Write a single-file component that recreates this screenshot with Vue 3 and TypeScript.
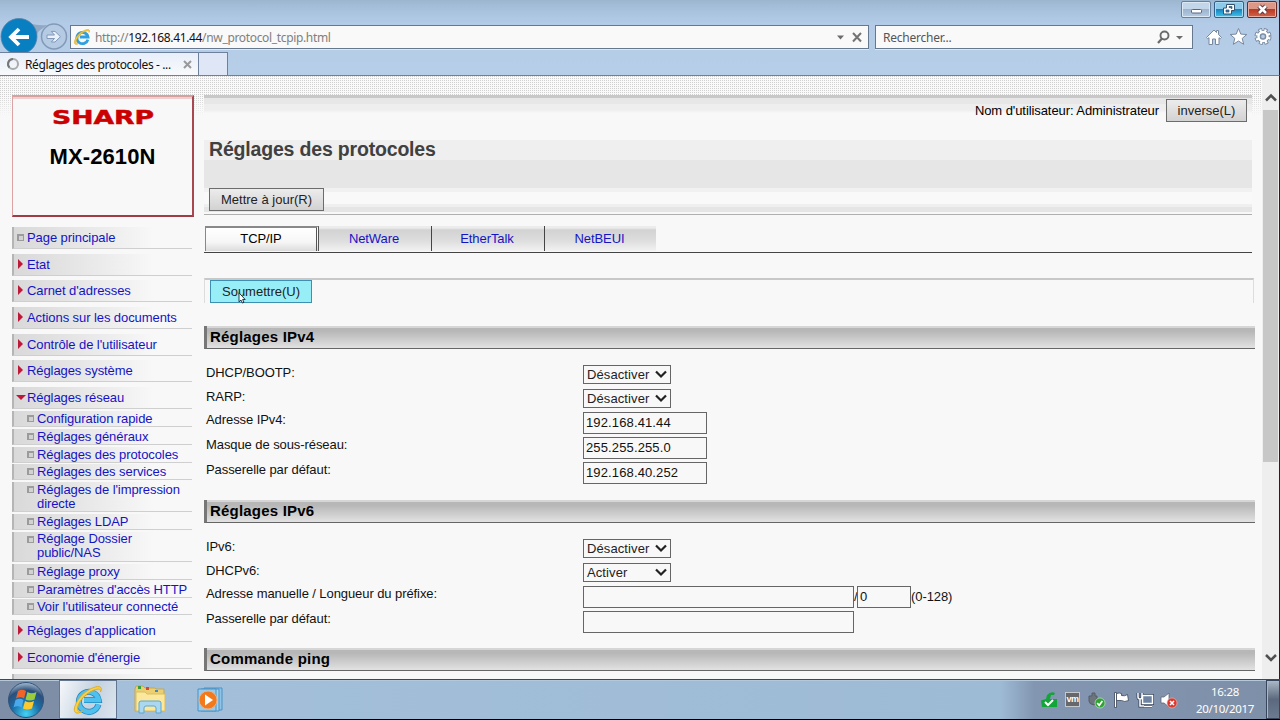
<script setup lang="ts">
import { ref } from 'vue'

interface MenuItem {
  label: string
  kind: 'page' | 'closed' | 'open' | 'sub'
  tall?: boolean
}

interface Field {
  label: string
  type: 'select' | 'text' | 'wide' | 'prefix'
  value: string
}

const before: MenuItem[] = [
  { label: 'Page principale', kind: 'page' },
  { label: 'Etat', kind: 'closed' },
  { label: "Carnet d'adresses", kind: 'closed' },
  { label: 'Actions sur les documents', kind: 'closed' },
  { label: "Contrôle de l'utilisateur", kind: 'closed' },
  { label: 'Réglages système', kind: 'closed' },
  { label: 'Réglages réseau', kind: 'open' },
]
const subs: MenuItem[] = [
  { label: 'Configuration rapide', kind: 'sub' },
  { label: 'Réglages généraux', kind: 'sub' },
  { label: 'Réglages des protocoles', kind: 'sub' },
  { label: 'Réglages des services', kind: 'sub' },
  { label: "Réglages de l'impression\ndirecte", kind: 'sub', tall: true },
  { label: 'Réglages LDAP', kind: 'sub' },
  { label: 'Réglage Dossier\npublic/NAS', kind: 'sub', tall: true },
  { label: 'Réglage proxy', kind: 'sub' },
  { label: "Paramètres d'accès HTTP", kind: 'sub' },
  { label: "Voir l'utilisateur connecté", kind: 'sub' },
]
const after: MenuItem[] = [
  { label: "Réglages d'application", kind: 'closed' },
  { label: "Economie d'énergie", kind: 'closed' },
  { label: '', kind: 'closed' },
]
const tabs = ['TCP/IP', 'NetWare', 'EtherTalk', 'NetBEUI']
const activeTab = ref('TCP/IP')

const ipv4: Field[] = [
  { label: 'DHCP/BOOTP:', type: 'select', value: 'Désactiver' },
  { label: 'RARP:', type: 'select', value: 'Désactiver' },
  { label: 'Adresse IPv4:', type: 'text', value: '192.168.41.44' },
  { label: 'Masque de sous-réseau:', type: 'text', value: '255.255.255.0' },
  { label: 'Passerelle par défaut:', type: 'text', value: '192.168.40.252' },
]
const ipv6: Field[] = [
  { label: 'IPv6:', type: 'select', value: 'Désactiver' },
  { label: 'DHCPv6:', type: 'select', value: 'Activer' },
  { label: 'Adresse manuelle / Longueur du préfixe:', type: 'prefix', value: '' },
  { label: 'Passerelle par défaut:', type: 'wide', value: '' },
]
const sections = [
  { title: 'Réglages IPv4', fields: ipv4, cls: 'v4' },
  { title: 'Réglages IPv6', fields: ipv6, cls: 'v6' },
  { title: 'Commande ping', fields: [] as Field[], cls: 'ping' },
]
</script>

<template>
  <div class="screen">
    <header class="chrome">
      <div class="winbtns">
        <span class="wb min"><svg width="30" height="16"><rect x="10.500" y="8.500" width="10" height="3.500" rx="1" fill="#fff" stroke="#566780" /></svg></span>
        <span class="wb max"><svg width="30" height="16"><path d="M12.500 3.500h8v6h-3v3.500h-8v-6h3z" fill="#fff" stroke="#36516e" /><path d="M12 9h3v2h-3zM15 5.500h3v2h-1v-1h-2z" fill="#2b7cb0" stroke="#36516e" stroke-width=".7" /></svg></span>
        <span class="wb cls"><svg width="30" height="16"><path d="M12 5l7 7M19 5l-7 7" stroke="#4c3039" stroke-width="4.500" /><path d="M12 5l7 7M19 5l-7 7" stroke="#fff" stroke-width="2.600" /></svg></span>
      </div>
      <div class="navrow">
        <svg class="nav" width="70" height="36" viewBox="0 0 70 36">
          <path d="M27 4q9 4 20 3l-8 6q-3 3-2 8z" fill="#91a8c3" />
          <circle cx="19" cy="18.500" r="18" fill="#087fc0" stroke="#5b83a8" stroke-width=".8" />
          <path d="M29 19H12M19 11l-8 8 8 8" fill="none" stroke="#fff" stroke-width="3.800" />
          <circle cx="54" cy="18.500" r="12.500" fill="#b5cbe4" stroke="#8299b8" stroke-width="1.500" />
          <path d="M47 17h7.500l-3.200-3.600h3.700l5.500 5.300-5.500 5.300h-3.700l3.200-3.500H47z" fill="#e9f1fa" stroke="#8299b8" />
        </svg>
        <div class="address">
          <svg class="ie" width="18" height="18" viewBox="0 0 32 32"><path d="M26.500 20.500A10 10 0 1 1 26.700 16H12" fill="none" stroke="#2f9fdf" stroke-width="5" /><path d="M4 29C-1 26 6 13 15 7S32 1 28.500 8C30 3 22 5 15 10S4 24 6 27q1 2 5 0-5 3-7 2z" fill="#f3c93c" stroke="#e5ac20" /></svg>
          <span class="url">http://<b>192.168.41.44</b>/nw_protocol_tcpip.html</span>
          <svg class="acts" width="30" height="14"><path d="M0 5.500h7L3.500 9.500z" fill="#6c6c6c" /><path d="M16 3l8 8.500M24 3l-8 8.500" stroke="#747474" stroke-width="2" /></svg>
        </div>
        <div class="search">
          <span>Rechercher...</span>
          <svg width="28" height="16"><circle cx="8.500" cy="6.500" r="4" fill="none" stroke="#6b6b6b" stroke-width="1.900" /><path d="M6 9.500l-4 4.500" stroke="#6b6b6b" stroke-width="2.200" /><path d="M20 7h7L23.500 10.500z" fill="#6c6c6c" /></svg>
        </div>
        <svg class="tools" width="68" height="20" viewBox="0 0 68 20" fill="#fff" stroke="#77899f">
          <path d="M1.500 10.500L9 3l2.500 2.500V3.500h2v4l3 3-1.200 1.200-1.300-1V17.500h-3.500V12H7.500v5.500H4V10.700l-1.300 1z" />
          <path d="M33.500 1.500l2.300 5.600 6 .4-4.600 3.900 1.500 5.900-5.200-3.300-5.200 3.300 1.500-5.900-4.600-3.900 6-.4z" />
          <g fill="none">
            <circle cx="58" cy="9.500" r="6" stroke-width="5" stroke-dasharray="3.200 1.512" />
            <circle cx="58" cy="9.500" r="4.300" stroke-width="4.600" />
            <circle cx="58" cy="9.500" r="5.800" stroke="#fff" stroke-width="3.600" stroke-dasharray="1.900 2.655" stroke-dashoffset="-.6" />
            <circle cx="58" cy="9.500" r="4.500" stroke="#fff" stroke-width="2.400" />
            <circle cx="58" cy="9.500" r="2.300" fill="#b6cde6" stroke-width=".8" />
          </g>
        </svg>
      </div>
      <div class="tabrow">
        <div class="btab">
          <svg width="14" height="14"><circle cx="7" cy="7" r="5" fill="none" stroke="#aaa" stroke-width="2" /><path d="M3.500 10.500A5 5 0 0 1 7 2" fill="none" stroke="#777" stroke-width="2" /></svg>
          <span class="btitle">Réglages des protocoles - ...</span>
          <svg class="bx" width="9" height="9"><path d="M1 1l7 7M8 1l-7 7" stroke="#999" stroke-width="2" /></svg>
        </div>
        <div class="newtab"></div>
      </div>
    </header>

    <div class="viewport">
      <aside class="side">
        <div class="brand">
          <svg width="120" height="26"><text x="9" y="19" class="sharp" textLength="102" lengthAdjust="spacingAndGlyphs">SHARP</text></svg>
          <div class="model">MX-2610N</div>
        </div>
        <nav class="menu">
          <a v-for="m in before" :key="m.label" class="item" :class="m.kind">
            <i class="mark"></i><span>{{ m.label }}</span>
          </a>
          <div class="subs">
            <a v-for="m in subs" :key="m.label" class="item sub" :class="{ tall: m.tall }">
              <i class="mark"></i><span>{{ m.label }}</span>
            </a>
          </div>
          <a v-for="m in after" :key="m.label" class="item" :class="[m.kind, { blank: !m.label }]">
            <i class="mark"></i><span>{{ m.label }}</span>
          </a>
        </nav>
      </aside>

      <main class="main">
        <div class="userbar">
          <span>Nom d'utilisateur: Administrateur</span>
          <button class="btn logout">inverse(L)</button>
        </div>
        <div class="content">
          <div class="titleband">
            <h1>Réglages des protocoles</h1>
            <button class="btn refresh">Mettre à jour(R)</button>
          </div>
          <div class="tabs">
            <a v-for="t in tabs" :key="t" class="tab" :class="{ on: t === activeTab }" @click="activeTab = t">{{ t }}</a>
          </div>
          <div class="submitrow">
            <button class="btn submit">Soumettre(U)
              <svg class="cursor" width="8" height="12" viewBox="0 0 8 12"><path d="M1 .8v9l2-1.700 1.500 3 1.500-.8-1.400-2.800h2.600z" fill="#fff" stroke="#123" stroke-width=".9" /></svg>
            </button>
          </div>
          <section v-for="s in sections" :key="s.title" :class="s.cls">
            <h2>{{ s.title }}</h2>
            <div class="fields">
              <div v-for="f in s.fields" :key="f.label" class="field" :class="f.type">
                <label>{{ f.label }}</label>
                <div v-if="f.type === 'select'" class="picker">
                  <span>{{ f.value }}</span>
                  <svg width="12" height="9"><path d="M1 1.500l5 5 5-5" fill="none" stroke="#222" stroke-width="2.200" /></svg>
                </div>
                <template v-else>
                  <div class="input">{{ f.value }}</div>
                  <template v-if="f.type === 'prefix'">
                    <span class="slash">/</span>
                    <div class="input short">0</div>
                    <span class="range">(0-128)</span>
                  </template>
                </template>
              </div>
            </div>
          </section>
        </div>
      </main>

      <div class="scroll">
        <svg width="14" height="12"><path d="M2 9.500L7 4.500l5 5" fill="none" stroke="#505050" stroke-width="2.500" /></svg>
        <div class="thumb"></div>
        <svg class="down" width="14" height="12"><path d="M2 3l5 5 5-5" fill="none" stroke="#505050" stroke-width="2.500" /></svg>
      </div>
    </div>

    <footer class="taskbar">
      <div class="start">
        <svg width="38" height="38" viewBox="0 0 38 38">
          <defs><radialGradient id="orb" cx=".5" cy=".9" r=".9"><stop offset="0" stop-color="#43d3f5" /><stop offset=".45" stop-color="#1a6da5" /><stop offset=".75" stop-color="#2c4f7a" /><stop offset="1" stop-color="#a8bdd2" /></radialGradient></defs>
          <circle cx="19" cy="19" r="17.500" fill="url(#orb)" stroke="#31557c" />
          <path d="M11 10q4-2.500 8 0l-2 7.500q-4-2.500-8 0z" fill="#f0642a" /><path d="M20.500 11q4 2.500 9 0l-2 7.500q-5 2-9 0z" fill="#9bcc3c" />
          <path d="M8.500 19q4-2.500 8 0l-2 7.500q-4-2.500-8 0z" fill="#48a9ec" /><path d="M18 20q4 2.500 9 0l-2 7.500q-5 2-9 0z" fill="#fcc92e" />
        </svg>
      </div>
      <div class="task active">
        <svg width="32" height="32" viewBox="0 0 32 32"><path d="M26.500 20.500A10 10 0 1 1 26.700 16H12" fill="none" stroke="#2187c4" stroke-width="6" /><path d="M26.500 20.500A10 10 0 1 1 26.700 16H12" fill="none" stroke="#4fc1ee" stroke-width="4.500" /><path d="M4 29C-1 26 6 13 15 7S32 1 28.500 8C30 3 22 5 15 10S4 24 6 27q1 2 5 0-5 3-7 2z" fill="#f8d347" stroke="#e1ac25" /></svg>
      </div>
      <div class="task folder">
        <svg width="34" height="32" viewBox="0 0 34 32"><path d="M2 5l1-3h7l2 2h10l1 1h8v22H2z" fill="#eccf70" stroke="#c7a749" /><path d="M5 2h3v3H5z" fill="#3a9c3d" /><path d="M13 3h3v3h-3z" fill="#d74a32" /><path d="M22 6h3v2h-3z" fill="#3a8ad0" /><path d="M3 8h9l2 2h18v17H3z" fill="#fbe89c" stroke="#d8bd62" /><path d="M6 29V19q0-2 2-2h18q2 0 2 2v10h-5v-5q0-2-2-2h-8q-2 0-2 2v5z" fill="#a9d8f0" stroke="#5ea6d0" /></svg>
      </div>
      <div class="task media">
        <svg width="30" height="28" viewBox="0 0 30 28"><path d="M8 2h18v22H8z" fill="#8fc4e8" stroke="#4b93c5" /><path d="M5 3h18v22H5z" fill="#a6d2ee" stroke="#4b93c5" /><path d="M2 3h18v22H2z" fill="#9acbea" stroke="#4b93c5" /><circle cx="12" cy="14" r="9" fill="#f27a1c" stroke="#e9b285" /><path d="M9 8.500l8 5.500-8 5.500z" fill="#fff" /></svg>
      </div>
      <div class="tray">
        <svg width="18" height="18"><path d="M1 9.500l5-1.500 1-4q4-4 8-2l-1 2h-3l-1 4h7v8H2z" fill="#12a537" /><path d="M5 11l3 3 5-5" fill="none" stroke="#fff" stroke-width="2" /></svg>
        <span class="vm">vm</span>
        <svg width="18" height="18"><path d="M4 2h3v3h2v5q0 3-3 4-5-1-5-4V5h3z" fill="#6c747c" stroke="#555d66" /><circle cx="12" cy="12" r="5" fill="#2fa332" stroke="#d6ecd6" stroke-width=".6" /><path d="M9.200 12l2 2.300 3.200-4.300" fill="none" stroke="#fff" stroke-width="1.700" /></svg>
        <svg width="18" height="18"><path d="M2.500 1.500h2v15h-2z" fill="#fff" stroke="#3a4556" stroke-width=".8" /><path d="M4.500 2.500q3-1 5 0v2q3 1 6-1l1 6q-4 2-7 0h-5z" fill="#fff" stroke="#3a4556" stroke-width=".8" /></svg>
        <svg width="18" height="18"><path d="M6.500 4.500h10v8h-10zM8 15.500h8M2 2v4q0 2 2 2t2-2V2M4 8v7h4" fill="none" stroke="#34435a" stroke-width="3" /><path d="M6.500 4.500h10v8h-10z" fill="#6e83a1" stroke="#fff" stroke-width="1.500" /><path d="M8 15.500h8M2 2v4q0 2 2 2t2-2V2M4 8v7h4" fill="none" stroke="#fff" stroke-width="1.500" /></svg>
        <svg width="18" height="18"><path d="M1 6h3l5-4v14l-5-4H1z" fill="#fff" stroke="#5e6878" stroke-width=".8" /><circle cx="12" cy="12" r="5" fill="#d83a31" stroke="#f2bfba" stroke-width=".6" /><path d="M10 10l4 4M14 10l-4 4" stroke="#fff" stroke-width="1.500" /></svg>
      </div>
      <div class="clock"><span>16:28</span><span>20/10/2017</span></div>
      <div class="desk"></div>
    </footer>
  </div>
</template>

<style>
body { margin: 0; overflow: hidden; }
</style>

<style scoped>
* { box-sizing: border-box; }
.screen { width: 1280px; height: 720px; display: flex; flex-direction: column; font-family: "Liberation Sans", Arial, sans-serif; font-size: 13px; letter-spacing: -.08px; background: #f8f8f8; overflow: hidden; color: #111; }
svg { display: block; flex: none; }

.chrome { height: 76px; flex: none; display: flex; flex-direction: column; background: linear-gradient(#9db6d0 0, #a9c3df 12px, #b3cbe6 24px, #b6cee7 70px); border-bottom: 1px solid #6d809c; border-right: 1px solid #222; position: relative; font-family: "Noto Sans", "Open Sans", sans-serif; }
.winbtns { position: absolute; right: 2px; top: 1px; display: flex; gap: 3px; }
.wb { width: 30px; height: 17px; border: 1px solid #66809e; border-radius: 2px; box-shadow: inset 0 0 0 1px #dce9f5; display: block; overflow: hidden; }
.wb svg { margin: -1px; }
.min { background: linear-gradient(#c3d5e8 48%, #9db4cf 50%, #b5cbe2); }
.max { background: linear-gradient(#8dc9ea 48%, #1a83bd 50%, #3fc5ec); border-color: #315f88; box-shadow: inset 0 0 0 1px #a9dcf3; }
.cls { background: linear-gradient(#dd9787 48%, #bb3a23 50%, #d0644a); border-color: #652a2c; box-shadow: inset 0 0 0 1px #e8aea2; }
.navrow { margin-top: 18px; height: 34px; display: flex; flex: none; align-items: flex-start; }
.address { margin-top: 7px; width: 799px; height: 24px; border: 1px solid #65788f; background: #f9f9f9; display: flex; align-items: center; padding-left: 2px; box-shadow: 0 1px #dfe9f3; }
.url { margin-left: 4px; font-size: 12px; letter-spacing: -.34px; color: #808080; white-space: nowrap; }
.url b { font-weight: 400; color: #111; }
.acts { margin-left: auto; margin-right: 1px; }
.search { margin: 7px 0 0 6px; width: 318px; height: 24px; border: 1px solid #65788f; background: #f9f9f9; display: flex; align-items: center; justify-content: space-between; padding: 0 8px 0 7px; color: #555; font-size: 12px; letter-spacing: -.24px; box-shadow: 0 1px #dfe9f3; }
.tools { margin: 9px 0 0 12px; }
.tabrow { display: flex; height: 23px; flex: none; position: relative; }
.btab { width: 199px; height: 23px; background: linear-gradient(#e8effa, #f8f9fb); border: solid #6d809c; border-width: 1px 1px 0 0; display: flex; align-items: center; padding-left: 6px; font-size: 12px; letter-spacing: -.38px; }
.btitle { margin-left: 5px; white-space: nowrap; }
.bx { margin-left: auto; margin-right: 6px; }
.newtab { width: 29px; border: solid #6d809c; border-width: 1px 1px 0 0; background: #dfe7f7; }

.viewport { height: 603px; flex: none; display: flex; overflow: hidden; background: linear-gradient(transparent 19px, #f8f8f8 40px), repeating-linear-gradient(90deg, transparent 0 1px, #fafafa 1px 2px), repeating-linear-gradient(#d0d0d0 0 1px, #fafafa 1px 2px); border-right: 1px solid #222; }
.side { width: 204px; flex: none; padding: 19px 0 0 12px; }
.brand { width: 182px; height: 122px; border: 1px solid #dba3a3; border-top: 2px solid #d9a0a0; border-right: 2px solid #a94750; border-bottom: 2px solid #a03c45; box-shadow: inset 0 2px #efd0d0; background: #f8f8f8; display: flex; flex-direction: column; align-items: center; padding-top: 8px; }
.sharp { font: bold 19px "DejaVu Sans", sans-serif; letter-spacing: 0; fill: #cb0000; stroke: #cb0000; stroke-width: .5px; }
.model { margin-top: 13px; font-size: 22px; line-height: 26px; font-weight: bold; color: #000; letter-spacing: .1px; }
.menu { display: flex; flex-direction: column; gap: 4.700px; margin-top: 10px; width: 180px; }
.item { display: flex; height: 22px; flex: none; color: #1414c4; border-bottom: 1px solid #cfcfcf; border-left: 2px solid #b5b5b5; background: linear-gradient(90deg, #d9d9d9 0, #e1e1e1 40px, #ededed 95px, #f8f8f8 140px); line-height: 21px; }
.item span { white-space: pre; }
.mark { display: block; width: 13px; height: 21px; flex: none; }
.page .mark::before, .sub .mark::before { content: ""; display: block; box-sizing: border-box; width: 7px; height: 7px; margin: 7px 0 0 3px; border: 1px solid #9b9b9b; border-top-width: 2px; border-left-width: 2px; background: #d2d2d2; }
.closed .mark::before { content: ""; display: block; margin: 5px 0 0 4px; border-left: 5px solid #bf1939; border-top: 5px solid transparent; border-bottom: 5px solid transparent; width: 0; }
.open .mark::before { content: ""; display: block; margin: 8px 0 0 2px; border-top: 5px solid #bf1939; border-left: 5px solid transparent; border-right: 5px solid transparent; width: 0; }
.subs { display: flex; flex-direction: column; gap: 1.800px; margin-top: -2.900px; }
.sub { height: 16px; line-height: 15px; }
.sub .mark { width: 23px; height: 14px; }
.sub .mark::before { margin: 4px 0 0 13px; }
.sub.tall { height: 30.200px; line-height: 14px; }
.sub.tall span { padding-top: .5px; }
.blank .mark { visibility: hidden; }

.main { width: 1058px; flex: none; }
.userbar { margin-top: 19px; height: 45px; width: 1048px; display: flex; justify-content: flex-end; padding: 4px 5px 0 0; background: linear-gradient(#c8c8c8 0 3px, #e7e7e7 3px 9px, #eeeeee 9px 15px, #f8f8f8 18px); }
.content { width: 1051px; }
.userbar span { line-height: 24px; margin-right: 7px; color: #000; }
.btn { font: 13px "Liberation Sans", Arial, sans-serif; letter-spacing: 0; height: 23px; padding: 0; border: 1px solid #6c6c6c; background: linear-gradient(#ececec, #d2d2d2); color: #222; display: block; white-space: nowrap; }
.logout { width: 81px; }
.titleband { height: 75px; width: 1048px; padding: 0 0 0 5px; border-bottom: 1px solid #b0b0b0; background: linear-gradient(#efefef 0 20px, #e6e6e6 20px 48px, #f1f1f1 48px 52px, #f9f9f9 52px 64px, #efefef 64px 67px, #e5e5e5 67px 72px, #f8f8f8 72px); }
h1 { margin: 0; height: 48px; font-size: 19.500px; line-height: 18px; letter-spacing: -.18px; color: #404040; }
.refresh { width: 115px; }
.tabs { margin-top: 11px; height: 27px; width: 1048px; display: flex; padding-left: 1px; border-bottom: 1px solid #444; }
.tab { width: 113px; height: 25px; padding-right: 2px; border-right: 1px solid #444; text-align: center; line-height: 25px; color: #1414c4; background: linear-gradient(#ececec 0 2px, #d2d2d2 4px, #dedede 15px, #f2f2f2); }
.tab.on { width: 114px; padding: 0; color: #000; border: 2px solid #888; border-left-width: 1px; border-bottom: 0; line-height: 22px; background: linear-gradient(#fff, #f6f6f6 14px, #dcdcdc); border-right: 3px double #555; }
.tab:last-child { border: 0; width: 111px; }
.submitrow { margin-top: 25px; height: 25px; width: 1050px; border: solid #ddd; border-width: 2px 1px 0; border-top-color: #c8c8c8; padding-left: 5px; }
.submit { width: 102px; height: 23px; background: #98eef6; border-color: #3c91b3; position: relative; }
.cursor { position: absolute; left: 27px; top: 11px; }
h2 { margin: 0; height: 23px; border-left: 3px solid #777; border-bottom: 1px solid #666; background: linear-gradient(#d6d6d6 0 2px, #b7b7b7 2px 5px, #c1c1c1 9px, #cdcdcd 14px, #e2e2e2 22px); font-size: 15px; line-height: 22px; padding-left: 3px; color: #000; letter-spacing: .2px; }
.v4 { margin-top: 23px; height: 174px; }
.v6 { height: 148px; }
.fields { padding-top: 16px; }
.field { display: flex; height: 25px; }
.field.select { height: 23.500px; }
label { width: 379px; flex: none; padding-left: 2px; line-height: 15px; }
.picker { width: 88px; height: 19px; border: 1px solid #666; display: flex; align-items: center; justify-content: space-between; padding: 0 3px; color: #222; letter-spacing: .1px; }
.input { width: 124px; height: 22px; border: 1px solid #666; padding-left: 2px; line-height: 20px; letter-spacing: .13px; }
.wide .input, .prefix .input { width: 271px; }
.slash { width: 3px; line-height: 22px; overflow: visible; }
.prefix .short { width: 54px; }
.range { line-height: 22px; }

.scroll { width: 17px; background: #eeeeee; display: flex; flex-direction: column; align-items: center; padding-top: 15px; flex: none; }
.thumb { width: 15px; height: 352px; margin-top: 7px; background: #c7c7c7; }
.down { margin-top: auto; margin-bottom: 15px; }

.taskbar { height: 41px; flex: none; border-top: 1px solid #3d4959; border-bottom: 1px solid #000; display: flex; align-items: center; background: linear-gradient(90deg, #7e8ea6 0 58px, #a3bfda 118px, #9ebbd6 1000px, #8396b1 1034px, #7e8fa8); box-shadow: inset 0 1px #b4c8db; }
.start { width: 59px; display: flex; padding-left: 7px; }
.task { height: 39px; display: flex; align-items: center; }
.task.active { width: 58px; justify-content: center; border: 1px solid #627690; background: linear-gradient(110deg, #f5f8fb, #c4d1df 55%, #dce6ef); }
.folder { margin-left: 16px; }
.media { margin-left: 29px; }
.tray { margin-left: auto; display: flex; align-items: center; gap: 6px; margin-right: 18px; }
.vm { width: 15px; height: 15px; margin: 0 2px 0 1px; background: #67686b; border: 1px solid #c5c8cc; color: #fff; font-size: 9px; line-height: 12px; font-weight: bold; text-align: center; letter-spacing: -.6px; }
.clock { width: 58px; display: flex; flex-direction: column; align-items: center; color: #fff; font: 11.500px/17px "Noto Sans", sans-serif; letter-spacing: -.3px; margin-right: 12px; white-space: nowrap; }
.desk { width: 14px; height: 39px; border: 1px solid #39455a; background: linear-gradient(#a9b7c6, #5b687d 50%, #6d7b90); box-shadow: inset 1px 1px #aab7c5; }
</style>
